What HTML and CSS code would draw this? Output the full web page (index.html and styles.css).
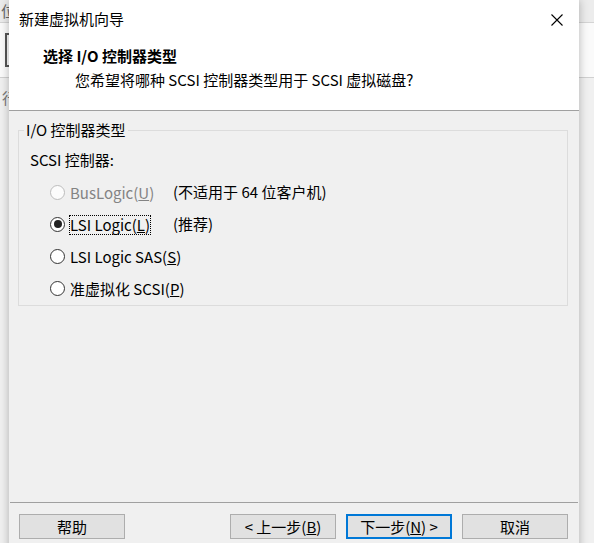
FILE: index.html
```html
<!DOCTYPE html>
<html lang="zh-CN">
<head>
<meta charset="utf-8">
<title>新建虚拟机向导</title>
<link rel="stylesheet" href="styles.css">
</head>
<body>
<div class="desktop">
  <div class="bg-window">
    <div class="bg-top"><span class="bg-char">位</span></div>
    <div class="bg-band"><span class="bg-bracket"></span></div>
    <div class="bg-row"><span class="bg-char2">行</span></div>
  </div>

  <div class="dialog">
    <div class="titlebar">
      <span class="title">新建虚拟机向导</span>
      <svg class="close" width="12" height="12" viewBox="0 0 12 12"><path d="M0.5 0.5L11.5 11.5M11.5 0.5L0.5 11.5" stroke="#000" stroke-width="1.1" fill="none"/></svg>
    </div>
    <div class="header">
      <div class="h-title">选择 I/O 控制器类型</div>
      <div class="h-sub">您希望将哪种 SCSI 控制器类型用于 SCSI 虚拟磁盘?</div>
    </div>
    <div class="content">
      <fieldset class="group">
        <legend>I/O 控制器类型</legend>
        <div class="label">SCSI 控制器:</div>
        <div class="row disabled">
          <span class="radio"></span>
          <span class="cell"><span class="opt">BusLogic(<u>U</u>)</span></span>
          <span class="note">(不适用于 64 位客户机)</span>
        </div>
        <div class="row">
          <span class="radio checked"></span>
          <span class="cell"><span class="opt focus">LSI Logic(<u>L</u>)</span></span>
          <span class="note">(推荐)</span>
        </div>
        <div class="row">
          <span class="radio"></span>
          <span class="cell"><span class="opt">LSI Logic SAS(<u>S</u>)</span></span>
        </div>
        <div class="row">
          <span class="radio"></span>
          <span class="cell"><span class="opt">准虚拟化 SCSI(<u>P</u>)</span></span>
        </div>
      </fieldset>
    </div>
    <div class="footer">
      <button class="btn">帮助</button>
      <div class="spacer"></div>
      <button class="btn">&lt; 上一步(<u>B</u>)</button>
      <button class="btn default">下一步(<u>N</u>) &gt;</button>
      <button class="btn">取消</button>
    </div>
  </div>
</div>
</body>
</html>
```
FILE: styles.css
```css
html, body {
  margin: 0;
  padding: 0;
  width: 594px;
  height: 543px;
  overflow: hidden;
  background: #f0f0f0;
  font-family: "Noto Sans CJK SC", "Microsoft YaHei", sans-serif;
  font-size: 15px;
  color: #000;
}

.desktop {
  position: relative;
  width: 594px;
  height: 543px;
  background: #f0f0f0;
}

.bg-window {
  position: absolute;
  left: 0;
  top: 0;
  width: 594px;
  height: 543px;
}

.bg-top {
  height: 22px;
  background: #ececec;
  border-bottom: 1px solid #d4d4d4;
  position: relative;
}

.bg-char {
  position: absolute;
  left: 1px;
  top: 1px;
  font-size: 15px;
  line-height: 20px;
  color: #666;
}

.bg-band {
  height: 54px;
  background: #fafafa;
  border-bottom: 1px solid #d0d0d0;
  position: relative;
}

.bg-bracket {
  position: absolute;
  left: 5px;
  top: 10px;
  width: 6px;
  height: 30px;
  border: 2px solid #555;
  border-right: none;
}

.bg-row {
  position: relative;
  height: 40px;
}

.bg-char2 {
  position: absolute;
  left: 2px;
  top: 10px;
  line-height: 20px;
  color: #777;
}

.dialog {
  position: absolute;
  left: 9px;
  top: 0;
  width: 570px;
  height: 560px;
  background: #f0f0f0;
  box-shadow: 0 0 9px rgba(0, 0, 0, 0.28);
  display: flex;
  flex-direction: column;
}

.titlebar {
  height: 38px;
  background: #fff;
  display: flex;
  align-items: center;
  justify-content: space-between;
  padding: 0 16px 0 10px;
  flex: none;
}

.title {
  line-height: 20px;
}

.close {
  display: block;
  margin-top: 1px;
}

.header {
  background: #fff;
  border-bottom: 1px solid #a0a0a0;
  box-sizing: border-box;
  padding-top: 8px;
  flex: none;
  height: 73px;
}

.h-title {
  font-weight: bold;
  line-height: 20px;
  padding-left: 34px;
}

.h-sub {
  line-height: 20px;
  margin-top: 4px;
  padding-left: 66px;
}

.content {
  height: 391px;
  flex: none;
  padding-top: 9px;
  box-sizing: border-box;
}

.group {
  margin: 0 11px 0 9px;
  padding: 10px 11px 1px 11px;
  border: 1px solid #dcdcdc;
  min-width: 0;
}

.group legend {
  padding: 0 2px;
  margin-left: -6px;
  line-height: 20px;
}

.label {
  line-height: 20px;
  margin-bottom: 6px;
}

.row {
  height: 32px;
  display: flex;
  align-items: center;
}

.radio {
  width: 13px;
  height: 13px;
  border: 1px solid #333;
  border-radius: 50%;
  background: #fff;
  margin-left: 20px;
  position: relative;
  flex: none;
}

.radio.checked::after {
  content: "";
  position: absolute;
  left: 2.5px;
  top: 2.5px;
  width: 8px;
  height: 8px;
  border-radius: 50%;
  background: #222;
}

.cell {
  width: 104px;
  flex: none;
  margin-left: 4px;
  white-space: nowrap;
}

.opt {
  display: inline-block;
  padding: 0 1px;
  line-height: 20px;
}

.opt.focus {
  outline: 1px dotted #000;
  outline-offset: -1px;
}

.note {
  line-height: 20px;
  white-space: nowrap;
}

.disabled .radio {
  border-color: #bcbcbc;
  background: #fcfcfc;
}

.disabled .opt {
  color: #838383;
}

.footer {
  margin: 0 1px;
  border-top: 1px solid #a0a0a0;
  padding: 11px 10px 0 9px;
  display: flex;
  gap: 10px;
  flex: none;
}

.spacer {
  flex: 1;
}

.btn {
  width: 106px;
  height: 25px;
  box-sizing: border-box;
  background: #e1e1e1;
  border: 1px solid #adadad;
  font-family: "Noto Sans CJK SC", "Microsoft YaHei", sans-serif;
  font-size: 15px;
  line-height: 20px;
  padding: 0;
  color: #000;
}

.btn.default {
  border: 2px solid #0078d7;
}
```
